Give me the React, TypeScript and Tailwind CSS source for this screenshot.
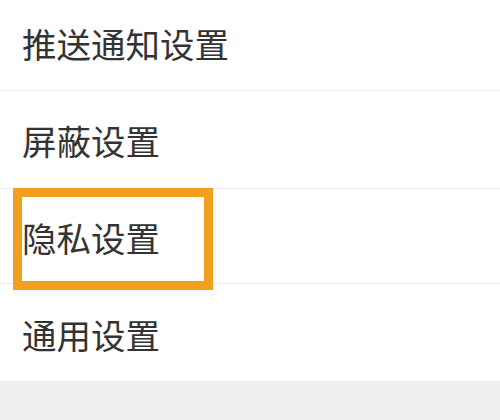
import React from "react";

const font = { fontFamily: '"Noto Sans CJK SC", "Noto Sans", sans-serif' };

export default function App() {
  return (
    <div className="relative w-[500px] h-[420px] bg-white overflow-hidden" style={font}>
      <div className="flex flex-col">
        <div className="h-[90px] flex items-center pl-[22px] pb-[3px] text-[34.5px] leading-none text-[#333333]">推送通知设置</div>
        <div className="h-px bg-[#ededed]" />
        <div className="h-[97px] flex items-center pl-[22px] pt-[2px] text-[34.5px] leading-none text-[#333333]">屏蔽设置</div>
        <div className="h-px bg-[#ededed]" />
        <div className="h-[94px] flex items-center pl-[22px] pt-[3px] text-[34.5px] leading-none text-[#333333]">隐私设置</div>
        <div className="h-px bg-[#ededed]" />
        <div className="h-[97px] flex items-center pl-[22px] pt-[3px] text-[34.5px] leading-none text-[#333333]">通用设置</div>
        <div className="h-[40px] bg-[#efefef]" />
      </div>
      <div className="absolute left-[13px] top-[188px] w-[200px] h-[102px] border-[9px] border-[#f29e1f]" />
    </div>
  );
}
